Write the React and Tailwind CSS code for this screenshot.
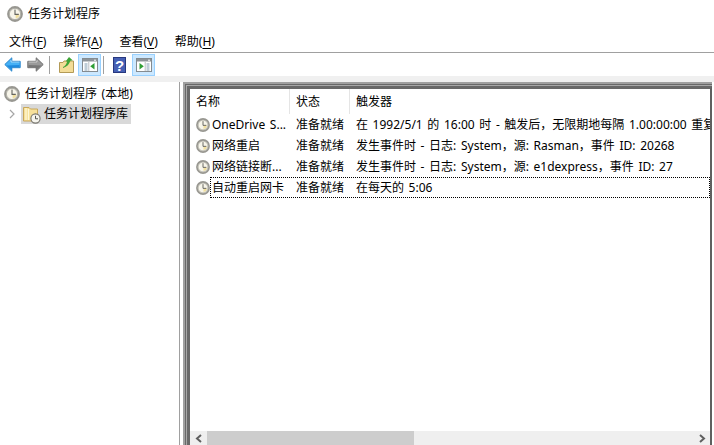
import React from "react";

const ClockIcon = ({ size = 14 }) => (
  <svg width={size} height={size} viewBox="0 0 16 16" className="shrink-0">
    <circle cx="8" cy="8" r="7" fill="#f7f5ea" stroke="#989791" strokeWidth="1.8" />
    <circle cx="8" cy="8" r="5.6" fill="none" stroke="#6f6e68" strokeWidth="0.5" />
    <path d="M8.6 8.6H12.6A4.8 4.8 0 0 1 8.6 12.6Z" fill="#f0dfa0" />
    <path d="M8 3.6V8.4H11.8" fill="none" stroke="#65645e" strokeWidth="1.1" />
  </svg>
);

const FolderClockIcon = () => (
  <svg width="18" height="19" viewBox="0 0 18 19" className="shrink-0">
    <path d="M0.5 2.5H6L7.5 4H14.5V16H0.5Z" fill="#f7e09a" stroke="#c9a85a" strokeWidth="1" />
    <path d="M3 3V15M5.5 4V15" stroke="#fff8d8" strokeWidth="1.2" />
    <circle cx="12.5" cy="13.5" r="4.6" fill="#f6f5ee" stroke="#77756e" strokeWidth="1.1" />
    <path d="M12.5 10.8V13.8H15" fill="none" stroke="#55544e" strokeWidth="1" />
  </svg>
);

const ArrowIcon = ({ dir, fill, dark, edge }) => (
  <svg width="17" height="15" viewBox="0 0 17 15" className={dir === "right" ? "shrink-0 -scale-x-100" : "shrink-0"}>
    <path d="M0.8 7.5L7.8 0.8V4.3H16.2V10.7H7.8V14.2Z" fill={fill} stroke={edge} strokeWidth="1" strokeLinejoin="round" />
    <path d="M2.5 8.5L8 13V10H15.5V8Z" fill={dark} />
    <path d="M7 3V5H15.5" fill="none" stroke="#ffffff" strokeOpacity="0.5" strokeWidth="1" />
  </svg>
);

const UpFolderIcon = () => (
  <svg width="15" height="17" viewBox="0 0 15 17" className="shrink-0">
    <path d="M0.5 6.5H4L5 5H14.5V16.5H0.5Z" fill="#f3dc98" stroke="#b39a56" strokeWidth="1" />
    <path d="M4 11C6 10.5 7.5 8 8.2 5.5L6.6 5.5L10 1L13.6 4.2L11.3 4.8C10.5 8 8 11 4 12Z" fill="#3ea536" />
  </svg>
);

const PaneIcon = ({ side }) => (
  <svg width="16" height="14" viewBox="0 0 16 14">
    <rect x="0.5" y="0.5" width="15" height="13" fill="#ffffff" stroke="#848b90" />
    <rect x="1" y="1" width="14" height="2.5" fill="#8d9499" />
    <path d="M12 2.2H14" stroke="#ffffff" strokeWidth="1" />
    {side === "left" ? (
      <>
        <path d="M2.5 6H5.5M2.5 8H5.5M2.5 10H5.5M2.5 12H5.5" stroke="#7f9bb0" />
        <path d="M6.8 4V13" stroke="#b9bec2" />
        <path d="M12.5 5V11.5L8.2 8.2Z" fill="#2f9e34" />
      </>
    ) : (
      <>
        <path d="M10.5 6H13.5M10.5 8H13.5M10.5 10H13.5M10.5 12H13.5" stroke="#7f9bb0" />
        <path d="M9.2 4V13" stroke="#b9bec2" />
        <path d="M3.5 5V11.5L7.8 8.2Z" fill="#2f9e34" />
      </>
    )}
  </svg>
);

const HelpIcon = () => (
  <svg width="13" height="16" viewBox="0 0 13 16" className="shrink-0">
    <rect x="0" y="0" width="13" height="16" fill="#27387f" />
    <rect x="1" y="1" width="11" height="14" fill="#4660b4" />
    <text x="6.5" y="13.5" textAnchor="middle" fontSize="15" fontWeight="700" fill="#ffffff" fontFamily="Liberation Sans">?</text>
  </svg>
);

const Separator = () => <div className="w-px h-[18px] bg-[#a0a0a0] shrink-0" />;

const ToggleButton = ({ side }) => (
  <div className="w-[23px] h-[22px] shrink-0 flex items-center justify-center bg-[#cce8ff] border border-[#99d1ff]">
    <PaneIcon side={side} />
  </div>
);

const MenuItem = ({ label, hotkey }) => (
  <span>
    {label}(<span className="underline underline-offset-2">{hotkey}</span>)
  </span>
);

const tasks = [
  { name: "OneDrive S...", status: "准备就绪", trigger: "在 1992/5/1 的 16:00 时 - 触发后，无限期地每隔 1.00:00:00 重复" },
  { name: "网络重启", status: "准备就绪", trigger: "发生事件时 - 日志: System，源: Rasman，事件 ID: 20268" },
  { name: "网络链接断...", status: "准备就绪", trigger: "发生事件时 - 日志: System，源: e1dexpress，事件 ID: 27" },
  { name: "自动重启网卡", status: "准备就绪", trigger: "在每天的 5:06", focused: true },
];

const App = () => {
  return (
    <div className="w-[714px] h-[445px] bg-white flex flex-col overflow-hidden text-[12px] text-black [word-spacing:1.5px] font-['Noto_Sans','Noto_Sans_CJK_SC',sans-serif]">
      {/* title bar */}
      <div className="h-[30px] shrink-0 flex items-center gap-[5px] pl-[7px] pb-[3px]">
        <ClockIcon size={16} />
        <span className="leading-none">任务计划程序</span>
      </div>

      {/* menu */}
      <div className="h-[21px] shrink-0 flex items-center gap-[17px] pl-[9px] pt-[1px] border-b border-[#a0a0a0] box-content">
        <MenuItem label="文件" hotkey="F" />
        <MenuItem label="操作" hotkey="A" />
        <MenuItem label="查看" hotkey="V" />
        <MenuItem label="帮助" hotkey="H" />
      </div>

      {/* toolbar */}
      <div className="h-[29px] shrink-0 flex flex-col">
        <div className="h-[23px] flex items-center pl-[4px]">
          <ArrowIcon dir="left" fill="#45b0f5" dark="#1f8ade" edge="#2a86cc" />
          <div className="w-[6px] shrink-0" />
          <ArrowIcon dir="right" fill="#9a9a9a" dark="#777777" edge="#6f6f6f" />
          <div className="w-[5px] shrink-0" />
          <Separator />
          <div className="w-[9px] shrink-0" />
          <UpFolderIcon />
          <div className="w-[4px] shrink-0" />
          <ToggleButton side="left" />
          <div className="w-[2px] shrink-0" />
          <Separator />
          <div className="w-[9px] shrink-0" />
          <HelpIcon />
          <div className="w-[6px] shrink-0" />
          <ToggleButton side="right" />
        </div>
        <div className="flex-1 bg-[#f0f0f0]" />
      </div>

      {/* panes */}
      <div className="flex-1 min-h-0 flex">
        <div className="w-[179px] shrink-0 pt-[2px] leading-[20px]">
          <div className="flex items-center h-[20px] pl-[4px] gap-[5px]">
            <ClockIcon size={16} />
            <span>任务计划程序 (本地)</span>
          </div>
          <div className="flex items-center h-[20px] pl-[9px]">
            <span className="w-[12px] shrink-0">
              <svg width="6" height="10" viewBox="0 0 6 10">
                <path d="M1 1L5 5L1 9" fill="none" stroke="#a6a6a6" strokeWidth="1.2" />
              </svg>
            </span>
            <div className="flex items-center h-[20px] w-[110px] gap-[3px] pl-[2px] bg-[#d9d9d9]">
              <FolderClockIcon />
              <span>任务计划程序库</span>
            </div>
          </div>
        </div>

        {/* right pane, striped splitter frame */}
        <div className="flex-1 min-w-0 flex flex-col border-l border-l-[#a0a0a0] pl-[3px] pr-[2px]">
          <div className="flex-1 min-h-0 flex border-l-2 border-t-2 border-[#a0a0a0]">
            <div className="flex-1 min-w-0 flex border-l border-t border-[#696969]">
              <div className="flex-1 min-w-0 flex border-l border-t border-[#a8a8a8]">
                <div className="flex-1 min-w-0 flex flex-col border-l-[3px] border-t-[3px] border-r-2 border-l-[#696969] border-t-[#696969] border-r-[#606060] bg-white">
                  <div className="flex-1 min-h-0 overflow-hidden">
                    <div className="h-[25px] flex items-center">
                      <div className="w-[100px] h-full pl-[6px] flex items-center border-r border-[#e5e5e5]">名称</div>
                      <div className="w-[60px] h-full pl-[6px] flex items-center border-r border-[#e5e5e5]">状态</div>
                      <div className="flex-1 pl-[6px]">触发器</div>
                    </div>
                    <div className="flex flex-col">
                      {tasks.map((t) => (
                        <div key={t.name} className="h-[21px] flex items-center whitespace-nowrap">
                          <div className="w-[22px] shrink-0 pl-[6px]">
                            <ClockIcon />
                          </div>
                          <div className={t.focused ? "flex h-[21px] flex-1 items-center border border-dotted border-black -ml-[2px] pl-[1px]" : "flex flex-1 items-center"}>
                            <div className="w-[78px] shrink-0">{t.name}</div>
                            <div className="w-[60px] pl-[6px] shrink-0">{t.status}</div>
                            <div className="pl-[6px]">{t.trigger}</div>
                          </div>
                        </div>
                      ))}
                    </div>
                  </div>

                  {/* horizontal scrollbar */}
                  <div className="h-[14px] shrink-0 bg-[#efefef] flex items-center">
                    <div className="w-[17px] h-full flex items-center justify-center">
                      <svg width="8" height="9" viewBox="0 0 8 9">
                        <path d="M6 1L2 4.5L6 8" fill="none" stroke="#5f5f5f" strokeWidth="2" />
                      </svg>
                    </div>
                    <div className="w-[207px] h-full bg-[#cdcdcd]" />
                    <div className="flex-1" />
                    <div className="w-[17px] h-full flex items-center justify-center">
                      <svg width="8" height="9" viewBox="0 0 8 9">
                        <path d="M2 1L6 4.5L2 8" fill="none" stroke="#5f5f5f" strokeWidth="2" />
                      </svg>
                    </div>
                  </div>
                </div>
              </div>
            </div>
          </div>
        </div>
      </div>
    </div>
  );
};

export default App;
